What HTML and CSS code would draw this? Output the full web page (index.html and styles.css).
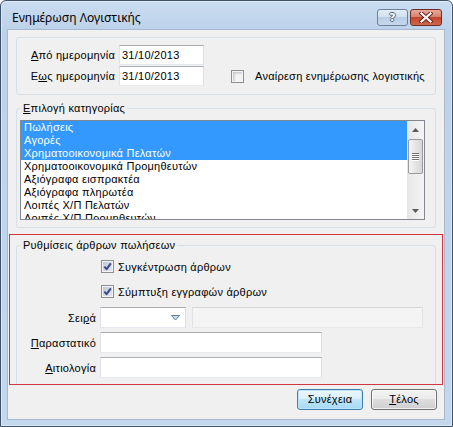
FILE: index.html
```html
<!DOCTYPE html>
<html lang="el">
<head>
<meta charset="utf-8">
<title>Ενημέρωση Λογιστικής</title>
<link rel="stylesheet" href="styles.css">
</head>
<body>
<div class="window">
  <div class="titlebar">
    <span class="title">Ενημέρωση Λογιστικής</span>
    <div class="caption">
      <div class="cap cap-help"><span class="qmark">?</span></div>
      <div class="cap cap-close">
        <svg width="14" height="11" viewBox="0 0 14 11">
          <path d="M2.5 1.5 L11.5 9.5 M11.5 1.5 L2.5 9.5" stroke="#6a1f17" stroke-width="4" stroke-linecap="square" fill="none"/>
          <path d="M2.5 1.5 L11.5 9.5 M11.5 1.5 L2.5 9.5" stroke="#ffffff" stroke-width="2.2" stroke-linecap="square" fill="none"/>
        </svg>
      </div>
    </div>
  </div>

  <div class="client">
    <div class="group group-dates">
      <div class="date-grid">
        <span class="lbl"><u>Α</u>πό ημερομηνία</span>
        <div class="textbox date">31/10/2013</div>
        <span></span>
        <span class="lbl">Ε<u>ω</u>ς ημερομηνία</span>
        <div class="textbox date">31/10/2013</div>
        <div class="check undo">
          <span class="cb"></span>
          <span class="cb-text">Αναίρεση ενημέρωσης λογιστικής</span>
        </div>
      </div>
    </div>

    <fieldset class="group group-cat">
      <legend><u>Ε</u>πιλογή κατηγορίας</legend>
      <div class="listbox">
        <div class="items">
          <div class="item sel">Πωλήσεις</div>
          <div class="item sel">Αγορές</div>
          <div class="item sel">Χρηματοοικονομικά Πελατών</div>
          <div class="item">Χρηματοοικονομικά Προμηθευτών</div>
          <div class="item">Αξιόγραφα εισπρακτέα</div>
          <div class="item">Αξιόγραφα πληρωτέα</div>
          <div class="item">Λοιπές Χ/Π Πελατών</div>
          <div class="item">Λοιπές Χ/Π Προμηθευτών</div>
        </div>
        <div class="vscroll">
          <div class="sbtn">
            <svg width="7" height="4" viewBox="0 0 7 4"><polygon points="0,4 7,4 3.5,0" fill="#5a5a5a"/></svg>
          </div>
          <div class="track">
            <div class="thumb">
              <span class="grip"></span><span class="grip"></span><span class="grip"></span><span class="grip"></span>
            </div>
          </div>
          <div class="sbtn">
            <svg width="7" height="4" viewBox="0 0 7 4"><polygon points="0,0 7,0 3.5,4" fill="#5a5a5a"/></svg>
          </div>
        </div>
      </div>
    </fieldset>

    <div class="redbox">
      <fieldset class="group group-sales">
        <legend>Ρυθμίσεις άρθρων πωλήσεων</legend>
        <div class="form">
          <div class="check-row">
            <span class="cb checked">
              <svg width="9" height="9" viewBox="0 0 9 9"><path d="M1.3 4.6 L3.6 7.2 L7.8 1.4" stroke="#3b4b8c" stroke-width="2" fill="none" stroke-linejoin="round"/></svg>
            </span>
            <span class="cb-text">Συγκέντρωση άρθρων</span>
          </div>
          <div class="check-row">
            <span class="cb checked">
              <svg width="9" height="9" viewBox="0 0 9 9"><path d="M1.3 4.6 L3.6 7.2 L7.8 1.4" stroke="#3b4b8c" stroke-width="2" fill="none" stroke-linejoin="round"/></svg>
            </span>
            <span class="cb-text">Σύμπτυξη εγγραφών άρθρων</span>
          </div>

          <span class="lbl first">Σει<u>ρ</u>ά</span>
          <div class="combo-row first">
            <div class="textbox combo">
              <span class="combo-arrow">
                <svg width="9" height="6" viewBox="0 0 9 6"><polygon points="0.5,0.5 8.5,0.5 4.5,5" fill="#c9dfea" stroke="#5f7f98" stroke-width="1"/></svg>
              </span>
            </div>
            <div class="textbox disabled"></div>
          </div>

          <span class="lbl"><u>Π</u>αραστατικό</span>
          <div class="textbox wide"></div>

          <span class="lbl"><u>Α</u>ιτιολογία</span>
          <div class="textbox wide"></div>
        </div>
      </fieldset>
    </div>

    <div class="buttons">
      <div class="btn default">Συνέχεια</div>
      <div class="btn"><u>Τ</u>έλος</div>
    </div>
  </div>
</div>
</body>
</html>
```

FILE: styles.css
```css
* {
  box-sizing: border-box;
}

html,
body {
  margin: 0;
  padding: 0;
}

body {
  width: 453px;
  height: 427px;
  overflow: hidden;
  background: #ffffff;
  font-family: "Liberation Sans", Arial, sans-serif;
  font-size: 11px;
  letter-spacing: 0.25px;
  color: #000000;
}

u {
  text-decoration: underline;
  text-underline-offset: 1px;
}

/* ---------- window frame ---------- */
.window {
  width: 453px;
  height: 427px;
  display: flex;
  flex-direction: column;
  border: 1px solid #3d5268;
  border-radius: 6px 6px 0 0;
  padding: 0 7px 6px 6px;
  background: linear-gradient(#cadcf0 0, #bdd2ea 28px, #c3d7ed 100%);
  box-shadow: inset 0 0 0 1px rgba(255, 255, 255, 0.45);
}

.titlebar {
  height: 28px;
  flex: none;
  display: flex;
  justify-content: space-between;
  align-items: flex-start;
}

.title {
  padding: 9px 0 0 5px;
  font-family: "Noto Sans", "Liberation Sans", sans-serif;
  font-size: 12px;
  line-height: 16px;
  letter-spacing: 0;
  color: #000000;
}

.caption {
  display: flex;
  gap: 2px;
  margin: 8px 3px 0 0;
}

.cap {
  height: 17px;
  border-radius: 3px;
  display: flex;
  align-items: center;
  justify-content: center;
}

.cap-help {
  width: 31px;
  border: 1px solid #6c8099;
  background: linear-gradient(#e3ecf7 0, #d3e0ef 45%, #b9cde3 50%, #c6d8ec 100%);
}

.qmark {
  font-family: "DejaVu Sans", sans-serif;
  font-weight: bold;
  font-size: 11px;
  line-height: 14px;
  letter-spacing: 0;
  color: #ffffff;
  text-shadow: 1px 0 0 #4a6484, -1px 0 0 #4a6484, 0 1px 0 #4a6484, 0 -1px 0 #4a6484;
}

.cap-close {
  width: 32px;
  border: 1px solid #6e2c22;
  background: linear-gradient(#e9a99a 0, #d8836f 45%, #c2452e 50%, #d1694d 100%);
}

/* ---------- client area ---------- */
.client {
  flex: 1;
  display: flex;
  flex-direction: column;
  background: #f0f0f0;
  border: 1px solid #a6b9ce;
}

.group {
  margin: 0;
  min-inline-size: 0;
  border: 1px solid #d5dfe5;
  border-radius: 3px;
}

legend {
  padding: 0 2px 0 3px;
  line-height: 13px;
}

.group-dates {
  margin: 7px 8px 0;
  height: 58px;
  padding: 7px 0 8px 0;
}

.date-grid {
  display: grid;
  grid-template-columns: 98px 85px auto;
  grid-template-rows: 20px 20px;
  column-gap: 4px;
  row-gap: 1px;
  align-items: center;
}

.lbl {
  justify-self: end;
  white-space: nowrap;
}

.textbox {
  height: 20px;
  background: #ffffff;
  border: 1px solid;
  border-color: #abadb3 #dbdfe6 #e3e9ef #e2e3ea;
}

.date {
  padding-left: 2px;
  line-height: 18px;
}

.check {
  display: flex;
  align-items: center;
}

.undo {
  margin-left: 23px;
}

.cb {
  width: 13px;
  height: 13px;
  flex: none;
  border: 1px solid #8e8f8f;
  background: #f4f4f4;
  box-shadow: inset 0 0 0 1px #f4f4f4, inset 2px 2px 3px #b9bcc2;
  display: flex;
  align-items: center;
  justify-content: center;
}

.cb.checked {
  background: linear-gradient(135deg, #bcc4d6, #e6e9f0);
  box-shadow: inset 0 0 0 1px #f4f4f4;
}

.undo .cb-text {
  margin-left: 11px;
}

/* ---------- category group ---------- */
.group-cat {
  margin: 7px 8px 0;
  padding: 5px 10px 7px 3px;
}

.listbox {
  height: 100px;
  display: flex;
  border: 1px solid #828790;
  background: #ffffff;
}

.items {
  flex: 1;
  overflow: hidden;
}

.item {
  height: 13px;
  line-height: 13px;
  padding-left: 3px;
  white-space: nowrap;
}

.item.sel {
  background: #3399ff;
  color: #ffffff;
}

.vscroll {
  width: 17px;
  flex: none;
  display: flex;
  flex-direction: column;
  background: linear-gradient(to right, #e6e6e6, #f5f5f5);
}

.sbtn {
  height: 17px;
  flex: none;
  display: flex;
  align-items: center;
  justify-content: center;
}

.track {
  flex: 1;
  padding-top: 1px;
}

.thumb {
  height: 35px;
  margin: 0 1px;
  border: 1px solid #9a9a9a;
  border-radius: 2px;
  background: linear-gradient(to right, #f4f4f4, #e5e5e5 50%, #d7d7d7);
  display: flex;
  flex-direction: column;
  align-items: center;
  justify-content: center;
  gap: 1px;
}

.grip {
  width: 7px;
  height: 1px;
  background: #707070;
  box-shadow: 0 1px 0 #ffffff;
}

/* ---------- sales settings ---------- */
.redbox {
  margin: 6px 0 0 1px;
  width: 434px;
  height: 151px;
  flex: none;
  border: 1px solid #d2363f;
  overflow: hidden;
}

.group-sales {
  margin: 4px 0 0 6px;
  width: 420px;
  padding: 4px 0 20px 3px;
}

.form {
  display: grid;
  grid-template-columns: 76px auto;
  column-gap: 4px;
  row-gap: 4px;
  align-items: center;
  justify-items: start;
}

.form .lbl {
  justify-self: end;
}

.check-row {
  grid-column: 2;
  height: 21px;
  display: flex;
  align-items: center;
  margin-left: 1px;
}

.check-row .cb-text {
  margin-left: 4px;
}

.first {
  margin-top: 1px;
}

.combo-row {
  display: flex;
  gap: 6px;
}

.combo {
  width: 86px;
  height: 21px;
  display: flex;
  justify-content: flex-end;
  align-items: center;
}

.combo-arrow {
  width: 20px;
  display: flex;
  justify-content: center;
}

.disabled {
  width: 231px;
  height: 21px;
  background: #f4f4f4;
  border-color: #d5d5d5 #e3e3e3 #e8e8e8 #e3e3e3;
}

.wide {
  width: 222px;
  height: 21px;
}

/* ---------- buttons ---------- */
.buttons {
  display: flex;
  justify-content: flex-end;
  gap: 8px;
  margin-top: 4px;
  padding-right: 7px;
}

.btn {
  width: 66px;
  height: 21px;
  border: 1px solid #707070;
  border-radius: 3px;
  background: linear-gradient(#f2f2f2 0, #ebebeb 50%, #dddddd 50%, #cfcfcf 100%);
  box-shadow: inset 0 0 0 1px rgba(255, 255, 255, 0.7);
  display: flex;
  align-items: center;
  justify-content: center;
  line-height: 13px;
}

.btn.default {
  border-color: #3c7fb1;
  background: linear-gradient(#eaf6fd 0, #d9f0fc 50%, #bee6fd 50%, #a7d9f5 100%);
  box-shadow: inset 0 0 0 1px #bfe4f9;
}
```
